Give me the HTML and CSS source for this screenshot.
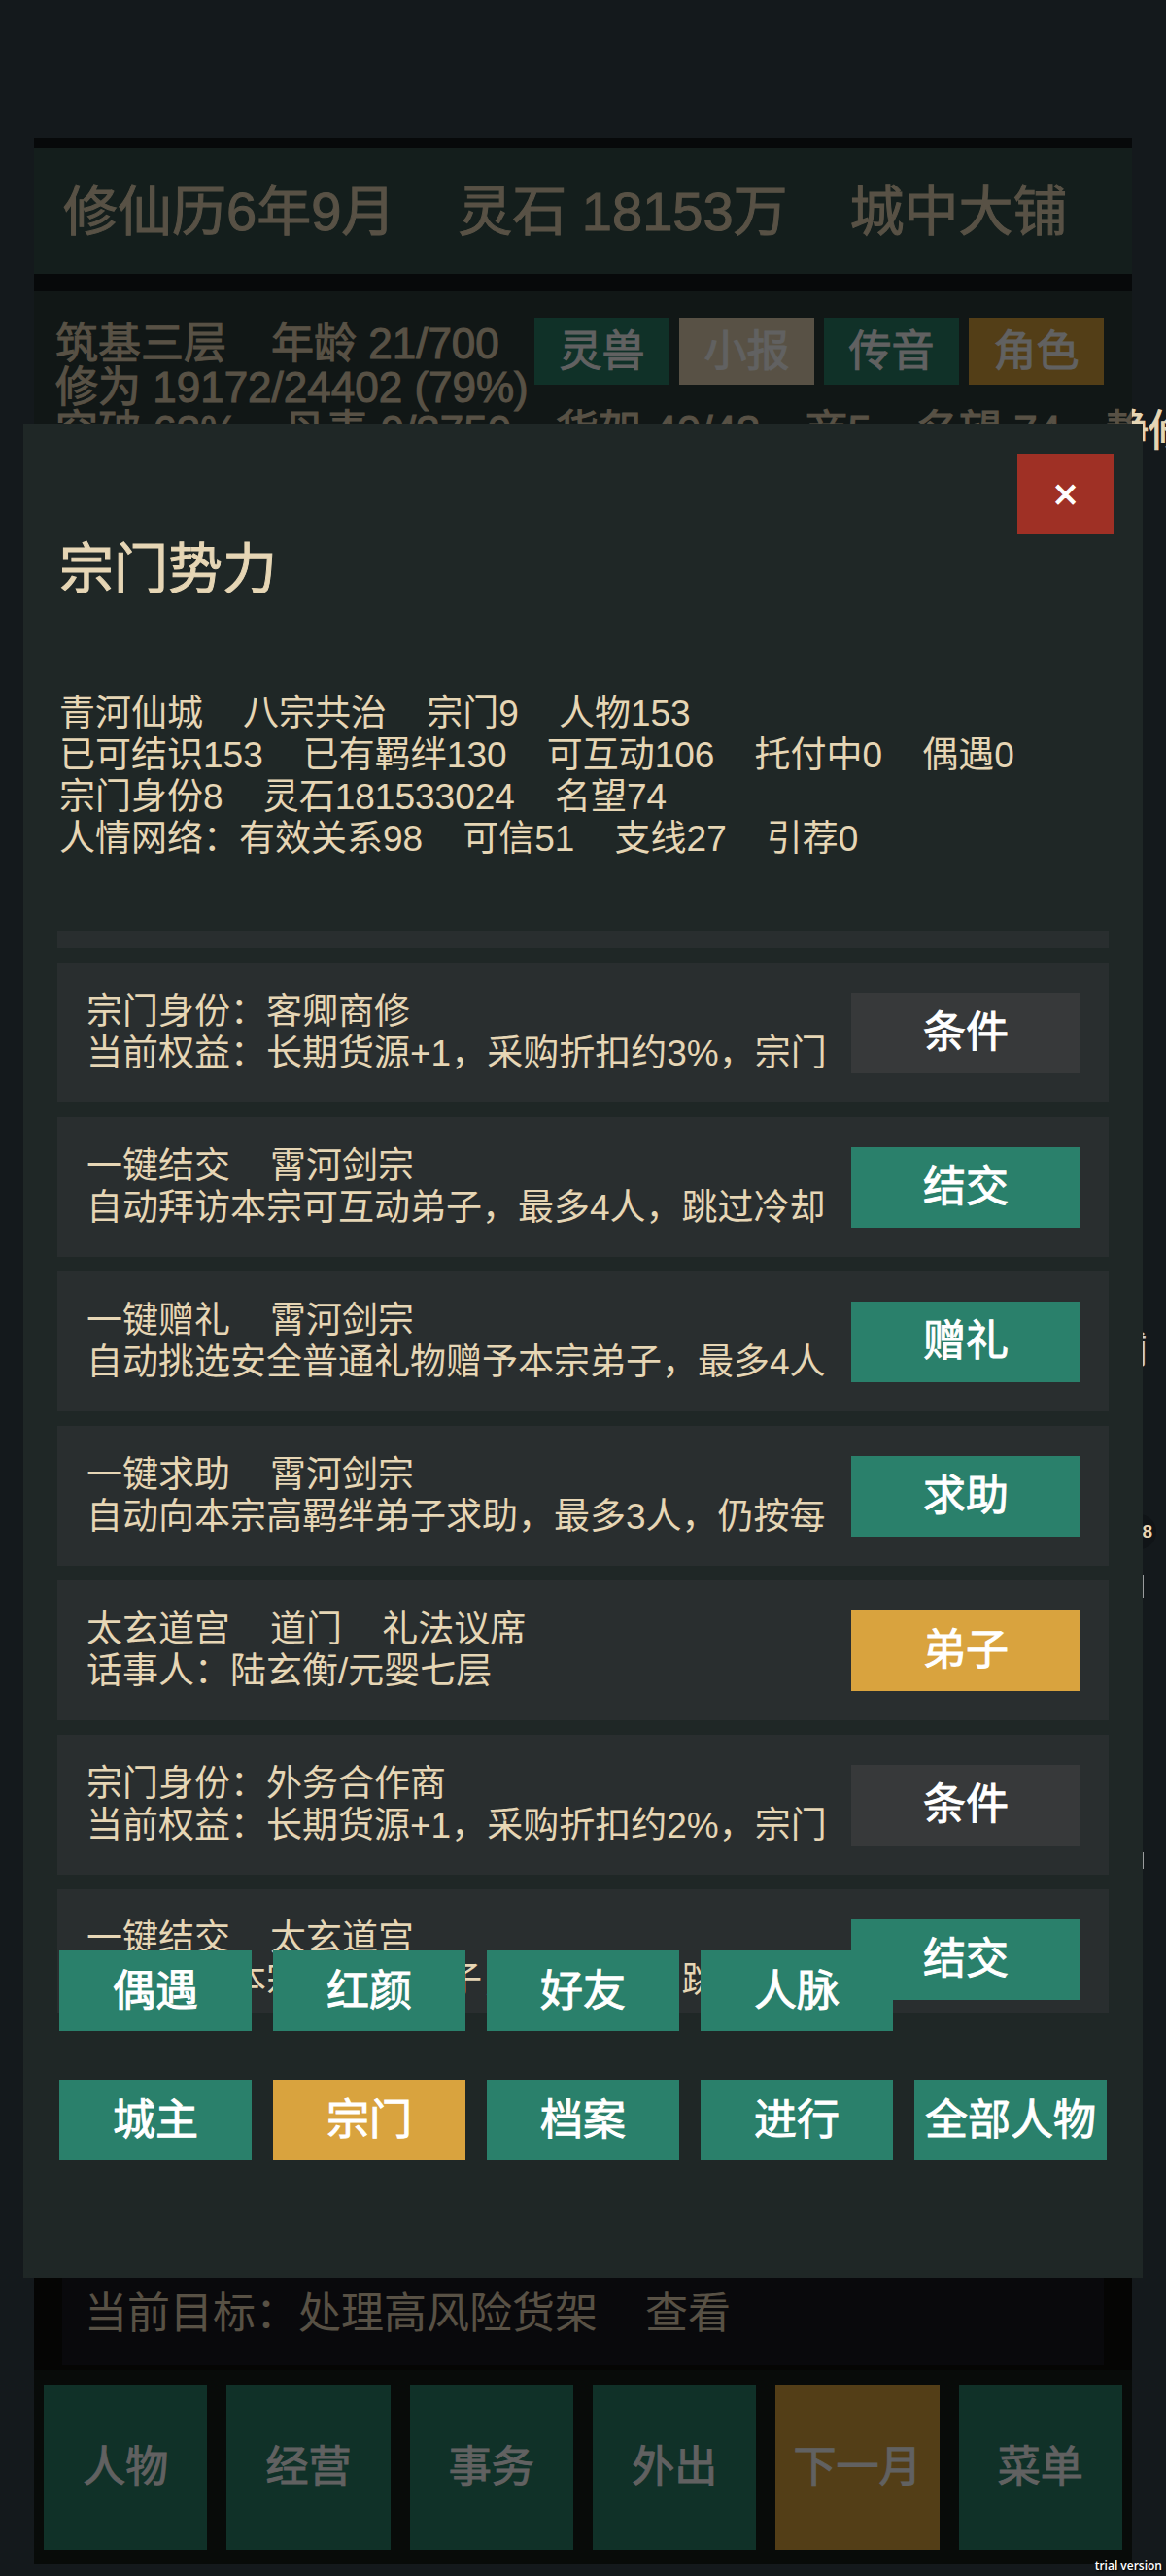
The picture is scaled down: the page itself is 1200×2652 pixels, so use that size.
FILE: index.html
```html
<!DOCTYPE html>
<html lang="zh-CN">
<head>
  <meta charset="UTF-8" />
  <meta name="viewport" content="width=device-width, initial-scale=1" />
  <title>宗门势力</title>
  <link rel="stylesheet" href="styles.css">
</head>
<body>
  <div class="stage">
    <div class="game">
      <header class="topbar">
        <span>修仙历6年9月</span>
        <span>灵石 18153万</span>
        <span>城中大铺</span>
      </header>

      <section class="player">
        <div class="player-head">
          <div class="player-main">
            <p class="player-line"><span>筑基三层</span><span>年龄 21/700</span></p>
            <p class="player-line"><span>修为 19172/24402 (79%)</span></p>
          </div>
          <div class="player-actions">
            <button class="btn">灵兽</button>
            <button class="btn btn-paper">小报</button>
            <button class="btn">传音</button>
            <button class="btn btn-gold">角色</button>
          </div>
        </div>
        <p class="player-line">
          <span>突破 63%</span>
          <span>丹毒 0/3750</span>
          <span>货架 40/43</span>
          <span>商5</span>
          <span>名望 74</span>
          <span>静修</span>
        </p>
      </section>

      <div class="scene">
        <span class="scene-label">铺</span>
        <span class="scene-badge">8</span>
        <span class="scene-tick"></span>
        <span class="scene-tick scene-tick-low"></span>
      </div>

      <div class="goal-wrap">
        <p class="goal">当前目标：处理高风险货架    查看</p>
      </div>

      <nav class="dock">
        <button class="btn">人物</button>
        <button class="btn">经营</button>
        <button class="btn">事务</button>
        <button class="btn">外出</button>
        <button class="btn btn-gold">下一月</button>
        <button class="btn">菜单</button>
      </nav>
      <div class="shade"></div>
    </div>

    <div class="modal" role="dialog" aria-labelledby="modal-title">
      <button class="btn btn-close" aria-label="关闭">×</button>
      <h1 class="modal-title" id="modal-title">宗门势力</h1>

      <p class="stats">青河仙城    八宗共治    宗门9    人物153
已可结识153    已有羁绊130    可互动106    托付中0    偶遇0
宗门身份8    灵石181533024    名望74
人情网络：有效关系98    可信51    支线27    引荐0</p>

      <div class="list">
        <div class="row row-cut"></div>
        <div class="row">
          <p class="row-text">宗门身份：客卿商修
当前权益：长期货源+1，采购折扣约3%，宗门</p>
          <button class="btn btn-grey">条件</button>
        </div>
        <div class="row">
          <p class="row-text">一键结交    霄河剑宗
自动拜访本宗可互动弟子，最多4人，跳过冷却</p>
          <button class="btn">结交</button>
        </div>
        <div class="row">
          <p class="row-text">一键赠礼    霄河剑宗
自动挑选安全普通礼物赠予本宗弟子，最多4人</p>
          <button class="btn">赠礼</button>
        </div>
        <div class="row">
          <p class="row-text">一键求助    霄河剑宗
自动向本宗高羁绊弟子求助，最多3人，仍按每</p>
          <button class="btn">求助</button>
        </div>
        <div class="row">
          <p class="row-text">太玄道宫    道门    礼法议席
话事人：陆玄衡/元婴七层</p>
          <button class="btn btn-gold">弟子</button>
        </div>
        <div class="row">
          <p class="row-text">宗门身份：外务合作商
当前权益：长期货源+1，采购折扣约2%，宗门</p>
          <button class="btn btn-grey">条件</button>
        </div>
        <div class="row">
          <p class="row-text">一键结交    太玄道宫
自动拜访本宗可互动弟子，最多4人，跳过冷却</p>
          <button class="btn">结交</button>
        </div>
      </div>

      <nav class="tabs">
        <button class="btn">偶遇</button>
        <button class="btn">红颜</button>
        <button class="btn">好友</button>
        <button class="btn">人脉</button>
        <button class="btn tab-first">城主</button>
        <button class="btn btn-gold">宗门</button>
        <button class="btn">档案</button>
        <button class="btn">进行</button>
        <button class="btn">全部人物</button>
      </nav>
    </div>

    <span class="watermark">trial version</span>
  </div>
</body>
</html>
```
FILE: styles.css
```css
* {
  box-sizing: border-box;
}

body {
  margin: 0;
  background: #14191c;
  color: #e6d6b5;
  font-family: "Liberation Sans", "Noto Sans CJK SC", sans-serif;
}

p, h1 {
  margin: 0;
}

.stage {
  position: relative;
  padding: 142px 35px 12px;
  overflow: hidden;
}

.btn {
  height: 83px;
  padding: 0;
  border: none;
  background: #2a806b;
  color: #fff;
  font-family: inherit;
  font-size: 44px;
  line-height: 1;
  white-space: nowrap;
  -webkit-text-stroke: 1px currentColor;
  cursor: pointer;
}

.btn-gold {
  background: #d9a33e;
}

.btn-paper {
  background: #e6d6b5;
}

.btn-grey {
  background: #37393a;
}

/* game screen behind the dialog */
.game {
  position: relative;
  display: flex;
  flex-direction: column;
  height: 2498px;
  padding-top: 10px;
  background: #14191c;
}

/* darkens the game only, not the page margins */
.shade {
  position: absolute;
  inset: 0;
  background: rgba(0, 0, 0, 0.62);
}

.topbar {
  display: flex;
  align-items: center;
  gap: 64px;
  height: 130px;
  padding: 0 30px 10px;
  background: #36504b;
  font-size: 56px;
  white-space: nowrap;
  -webkit-text-stroke: 1px currentColor;
}

.player {
  height: 217px;
  margin-top: 18px;
  padding: 27px 29px 0 22px;
  background: #2e3e3c;
}

.player-head {
  display: flex;
  justify-content: space-between;
}

.player-main {
  padding-top: 4px;
}

.player-line {
  display: flex;
  gap: 46px;
  font-size: 44px;
  line-height: 45px;
  white-space: nowrap;
  -webkit-text-stroke: 1px currentColor;
}

.player-actions {
  display: grid;
  grid-template-columns: repeat(4, 139px);
  gap: 10px;
}

.player-actions .btn {
  height: 69px;
}

.scene {
  position: relative;
  flex: 1;
}

.scene-label,
.scene-badge,
.scene-tick {
  position: absolute;
}

.scene-label {
  top: 850px;
  right: -16px;
  color: #ccc;
  font-size: 40px;
  line-height: 44px;
}

.scene-badge {
  top: 1042px;
  right: -25px;
  width: 36px;
  padding-right: 4px;
  border-radius: 18px;
  background: #101417;
  font-size: 19px;
  font-weight: bold;
  line-height: 36px;
  text-align: right;
}

.scene-tick {
  top: 1104px;
  right: -12px;
  width: 1px;
  height: 24px;
  background: #9a9c9d;
}

.scene-tick-low {
  top: 1390px;
  height: 17px;
}

.goal-wrap {
  padding: 0 29px 5px;
  background: #0e0e0c;
}

.goal {
  height: 110px;
  padding: 28px 23px;
  background: #181a20;
  font-size: 44px;
  line-height: 58px;
  white-space: pre;
}

.dock {
  display: grid;
  grid-template-columns: repeat(6, 1fr);
  gap: 20px;
  padding: 15px 10px;
  background: #151d19;
}

.dock .btn {
  height: 170px;
}

/* dialog */
.modal {
  position: absolute;
  top: 437px;
  left: 24px;
  right: 24px;
  padding: 112px 35px 121px;
  background: #1f2726;
}

.btn-close {
  position: absolute;
  top: 30px;
  right: 30px;
  width: 99px;
  background: #9f3025;
}

.modal-title {
  padding-left: 2px;
  font-size: 56px;
  font-weight: normal;
  line-height: 74px;
  -webkit-text-stroke: 1px currentColor;
}

.stats {
  padding: 90px 2px 73px;
  font-size: 37px;
  line-height: 43px;
  white-space: pre;
}

.list {
  display: flex;
  flex-direction: column;
  gap: 15px;
  height: 1114px;
  overflow: hidden;
}

.row {
  display: flex;
  flex: none;
  align-items: center;
  justify-content: space-between;
  height: 144px;
  padding: 0 29px 0 30px;
  background: #292e2f;
}

.row-cut {
  height: 18px;
}

.row-text {
  overflow: hidden;
  font-size: 37px;
  line-height: 43px;
  white-space: pre;
}

.row .btn {
  flex: none;
  width: 236px;
}

/* the tab rows ride up over the end of the list */
.tabs {
  position: relative;
  display: grid;
  grid-template-columns: repeat(5, 1fr);
  gap: 50px 22px;
  margin-top: -64px;
  padding: 0 2px;
}

.tab-first {
  grid-column: 1;
}

.watermark {
  position: absolute;
  right: 4px;
  bottom: 2px;
  color: #fff;
  font-family: "Open Sans", sans-serif;
  font-size: 12px;
  font-weight: 600;
  line-height: 16px;
  text-shadow: 1px 1px 2px #000;
}
```
